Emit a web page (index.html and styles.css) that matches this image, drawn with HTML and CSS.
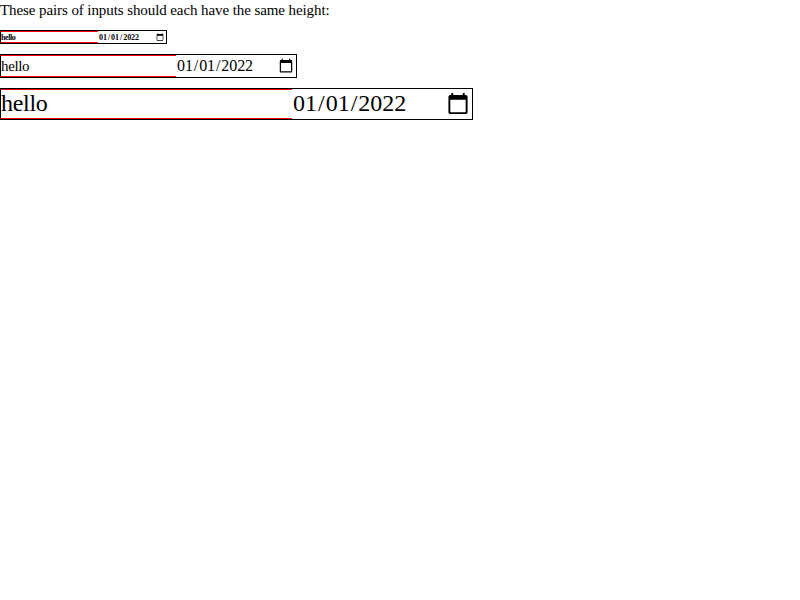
FILE: index.html
```html
<!DOCTYPE html>
<html lang="en">
<head>
<meta charset="utf-8">
<title>Input heights</title>
<link rel="stylesheet" href="styles.css">
</head>
<body>
<p class="intro">These pairs of inputs should each have the same height:</p>
<div class="pair small"><input type="text" value="hello"><input type="date" value="2022-01-01"></div>
<div class="pair medium"><input type="text" value="hello"><input type="date" value="2022-01-01"></div>
<div class="pair large"><input type="text" value="hello"><input type="date" value="2022-01-01"></div>
</body>
</html>
```
FILE: styles.css
```css
body {
  margin: 0;
  background: white;
  color: black;
  font-family: "Liberation Serif", serif;
  font-size: 15px;
}
.intro {
  margin: 0 0 10px;
  line-height: 20px;
  letter-spacing: -0.09px;
}
.pair {
  display: flex;
  box-sizing: border-box;
  border: 1px solid black;
  margin-bottom: 10px;
}
.pair input {
  box-sizing: border-box;
  font-family: "Liberation Serif", serif;
  font-size: inherit;
  color: black;
  margin: 0;
  padding: 0;
  border: 0;
  border-radius: 0;
  background: white;
}
.pair input[type="text"] {
  border-top: 1px solid red;
  border-bottom: 1px solid red;
}
.pair input[type="date"] {
  flex: 1;
  min-width: 0;
}
.small { font-size: 8px; width: 167px; height: 14px; }
.small input[type="text"] { width: 97px; font-weight: bold; letter-spacing: -0.4px; }
.small input[type="date"] { font-weight: bold; letter-spacing: -0.05px; }
.medium { width: 297px; height: 24px; }
.medium input[type="text"] { width: 175px; letter-spacing: -0.35px; }
.medium input[type="date"] { font-size: 16px; letter-spacing: -0.1px; }
.large { font-size: 24px; width: 473px; height: 32px; }
.large input[type="text"] { width: 291px; padding-bottom: 1px; letter-spacing: -0.3px; }
.large input[type="date"] { padding-bottom: 1px; }
```
